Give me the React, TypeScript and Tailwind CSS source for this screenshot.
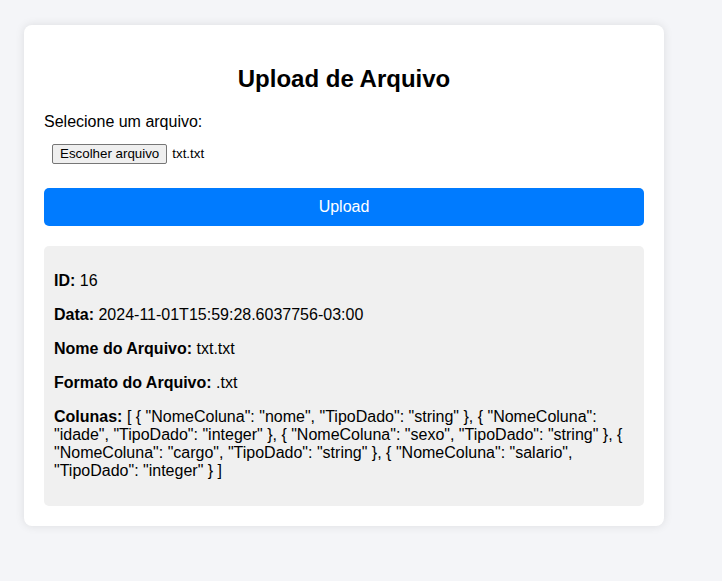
export default function App() {
  const font = { fontFamily: '"Liberation Sans", Arial, sans-serif' };
  const cols =
    '[ { "NomeColuna": "nome", "TipoDado": "string" }, { "NomeColuna": "idade", "TipoDado": "integer" }, { "NomeColuna": "sexo", "TipoDado": "string" }, { "NomeColuna": "cargo", "TipoDado": "string" }, { "NomeColuna": "salario", "TipoDado": "integer" } ]';
  return (
    <div className="min-h-[581px] bg-[#f4f5f8] pt-[25px] pl-[24px]" style={font}>
      <div className="w-[640px] bg-white rounded-[8px] p-[20px] shadow-[0_0_10px_rgba(0,0,0,0.1)] text-black">
        <h2 className="text-[24px] leading-[28px] font-bold text-center mt-[20px] mb-[20px]">Upload de Arquivo</h2>
        <label className="block text-[16px] leading-[18px]">Selecione um arquivo:</label>
        <div className="mt-[5px] p-[8px] flex items-center">
          <span className="h-[20px] px-[7px] border border-[#767676] rounded-[2px] bg-[#efefef] text-[13.33px] leading-[18px] flex items-center">Escolher arquivo</span>
          <span className="ml-[5px] text-[13.33px] leading-[18px]">txt.txt</span>
        </div>
        <button className="mt-[16px] w-full h-[38px] bg-[#007bff] text-white text-[16px] rounded-[5px]">Upload</button>
        <div className="mt-[20px] bg-[#f0f0f0] rounded-[5px] px-[10px] py-[10px] text-[16px] leading-[18px]">
          <p className="my-[16px]"><b>ID:</b> 16</p>
          <p className="my-[16px]"><b>Data:</b> 2024-11-01T15:59:28.6037756-03:00</p>
          <p className="my-[16px]"><b>Nome do Arquivo:</b> txt.txt</p>
          <p className="my-[16px]"><b>Formato do Arquivo:</b> .txt</p>
          <p className="my-[16px]"><b>Colunas:</b> {cols}</p>
        </div>
      </div>
    </div>
  );
}
